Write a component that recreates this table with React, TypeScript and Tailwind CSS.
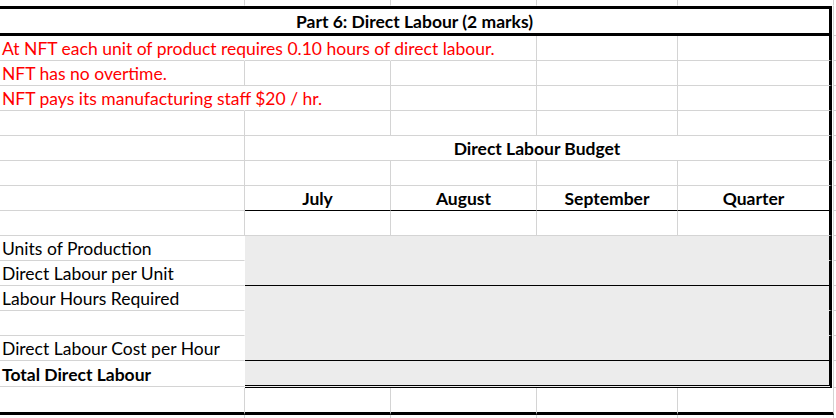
import React from "react";

type RB = "g" | "n" | "k";
type BB = "g" | "n" | "b" | "d" | "t";

const rc: Record<RB, string> = {
  g: "border-r border-r-[#d4d4d4]",
  n: "border-r border-r-transparent",
  k: "border-r-[3px] border-r-black",
};
const bc: Record<BB, string> = {
  g: "border-b border-b-[#d4d4d4]",
  n: "border-b border-b-transparent",
  b: "border-b border-b-black",
  d: "border-b-[3px] [border-bottom-style:double] border-b-black",
  t: "border-b-[3px] border-b-black",
};

function C({
  w,
  r = "g",
  b = "g",
  bg = false,
  h = "h-full",
  cls = "",
  children,
}: {
  w: string;
  r?: RB;
  b?: BB;
  bg?: boolean;
  h?: string;
  cls?: string;
  children?: React.ReactNode;
}) {
  return (
    <div
      className={`${w} ${h} shrink-0 flex items-end whitespace-nowrap ${rc[r]} ${bc[b]} ${
        bg ? "bg-[#ececec]" : ""
      } ${cls}`}
    >
      {children}
    </div>
  );
}

const Txt = ({ children, cls = "" }: { children: React.ReactNode; cls?: string }) => (
  <span className={`block leading-[17px] pb-[3px] pl-[2px] ${cls}`}>{children}</span>
);

const FBox = () => (
  <div className="ml-px w-[3px] h-full shrink-0 border-l border-l-[#d4d4d4] border-b border-b-[#d4d4d4]" />
);
const FOut = ({ b = "g" }: { b?: BB }) => (
  <div className={`w-[2px] h-full shrink-0 ${b === "n" ? "" : "border-b border-b-[#d4d4d4]"}`} />
);

function PlainRow({ children }: { children?: React.ReactNode }) {
  return <div className="flex h-[25px]">{children}</div>;
}

export default function App() {
  return (
    <div className="w-[836px] h-[418px] overflow-hidden bg-white font-[Lato,sans-serif] text-[17.5px] text-black">
      {/* row above the box */}
      <div className="flex h-[6px]">
        <C w="w-[245px]" b="n" />
        <C w="w-[146px]" b="n" />
        <C w="w-[146px]" b="n" />
        <C w="w-[141px]" b="n" />
        <C w="w-[156px]" b="n" />
        <FOut b="n" />
      </div>

      {/* header */}
      <div className="flex h-[30px]">
        <div className="w-[832px] h-full shrink-0 border-t-[3px] border-b-[3px] border-r-[3px] border-black flex items-end justify-center">
          <span className="block leading-[17px] pb-[3px] font-bold">Part 6: Direct Labour (2 marks)</span>
        </div>
        <FBox />
      </div>

      {/* notes */}
      <PlainRow>
        <C w="w-[245px]" r="n">
          <Txt cls="text-[#ff0000]">At NFT each unit of product requires 0.10 hours of direct labour.</Txt>
        </C>
        <C w="w-[146px]" r="n" />
        <C w="w-[146px]" />
        <C w="w-[141px]" />
        <C w="w-[154px]" r="k" />
        <FBox />
      </PlainRow>
      <PlainRow>
        <C w="w-[245px]">
          <Txt cls="text-[#ff0000]">NFT has no overtime.</Txt>
        </C>
        <C w="w-[146px]" />
        <C w="w-[146px]" />
        <C w="w-[141px]" />
        <C w="w-[154px]" r="k" />
        <FBox />
      </PlainRow>
      <PlainRow>
        <C w="w-[245px]" r="n">
          <Txt cls="text-[#ff0000]">NFT pays its manufacturing staff $20 / hr.</Txt>
        </C>
        <C w="w-[146px]" />
        <C w="w-[146px]" />
        <C w="w-[141px]" />
        <C w="w-[154px]" r="k" />
        <FBox />
      </PlainRow>
      <PlainRow>
        <C w="w-[245px]" />
        <C w="w-[146px]" />
        <C w="w-[146px]" />
        <C w="w-[141px]" />
        <C w="w-[154px]" r="k" />
        <FBox />
      </PlainRow>

      {/* Direct Labour Budget */}
      <PlainRow>
        <C w="w-[245px]" />
        <C w="w-[587px]" r="k" cls="justify-center">
          <span className="block leading-[17px] pb-[3px] font-bold">Direct Labour Budget</span>
        </C>
        <FBox />
      </PlainRow>
      <PlainRow>
        <C w="w-[245px]" />
        <C w="w-[146px]" />
        <C w="w-[146px]" />
        <C w="w-[141px]" />
        <C w="w-[154px]" r="k" />
        <FBox />
      </PlainRow>

      {/* months */}
      <PlainRow>
        <C w="w-[245px]" />
        {[
          ["w-[146px]", "July"],
          ["w-[146px]", "August"],
          ["w-[141px]", "September"],
        ].map(([w, t]) => (
          <C key={t} w={w} b="b" cls="justify-center">
            <span className="block leading-[17px] pb-[3px] font-bold">{t}</span>
          </C>
        ))}
        <C w="w-[154px]" r="k" b="b" cls="justify-center">
          <span className="block leading-[17px] pb-[3px] font-bold">Quarter</span>
        </C>
        <FBox />
      </PlainRow>
      <PlainRow>
        <C w="w-[245px]" />
        <C w="w-[146px]" />
        <C w="w-[146px]" />
        <C w="w-[141px]" />
        <C w="w-[154px]" r="k" />
        <FBox />
      </PlainRow>

      {/* budget lines */}
      <PlainRow>
        <C w="w-[245px]" r="n">
          <Txt>Units of Production</Txt>
        </C>
        <C w="w-[587px]" r="k" b="n" bg />
        <FBox />
      </PlainRow>
      <PlainRow>
        <C w="w-[245px]" r="n">
          <Txt>Direct Labour per Unit</Txt>
        </C>
        <C w="w-[587px]" r="k" b="b" bg />
        <FBox />
      </PlainRow>
      <PlainRow>
        <C w="w-[245px]" r="n">
          <Txt>Labour Hours Required</Txt>
        </C>
        <C w="w-[587px]" r="k" b="n" bg />
        <FBox />
      </PlainRow>
      <PlainRow>
        <C w="w-[245px]" r="n" />
        <C w="w-[587px]" r="k" b="n" bg />
        <FBox />
      </PlainRow>
      <PlainRow>
        <C w="w-[245px]" r="n">
          <Txt>Direct Labour Cost per Hour</Txt>
        </C>
        <C w="w-[587px]" r="k" b="b" bg />
        <FBox />
      </PlainRow>
      <div className="flex h-[27px]">
        <C w="w-[245px]" r="n" h="h-[26px]">
          <Txt cls="font-bold">Total Direct Labour</Txt>
        </C>
        <C w="w-[587px]" r="k" b="d" bg />
        <FBox />
      </div>

      {/* after box */}
      <div className="flex h-[27px]">
        <C w="w-[245px]" b="t" />
        <C w="w-[146px]" b="t" />
        <C w="w-[146px]" b="t" />
        <C w="w-[141px]" b="t" />
        <C w="w-[156px]" b="t" />
        <FOut b="n" />
      </div>
      <div className="flex h-[4px]">
        <C w="w-[245px]" b="n" />
        <C w="w-[146px]" b="n" />
        <C w="w-[146px]" b="n" />
        <C w="w-[141px]" b="n" />
        <C w="w-[156px]" b="n" />
        <FOut b="n" />
      </div>
    </div>
  );
}
